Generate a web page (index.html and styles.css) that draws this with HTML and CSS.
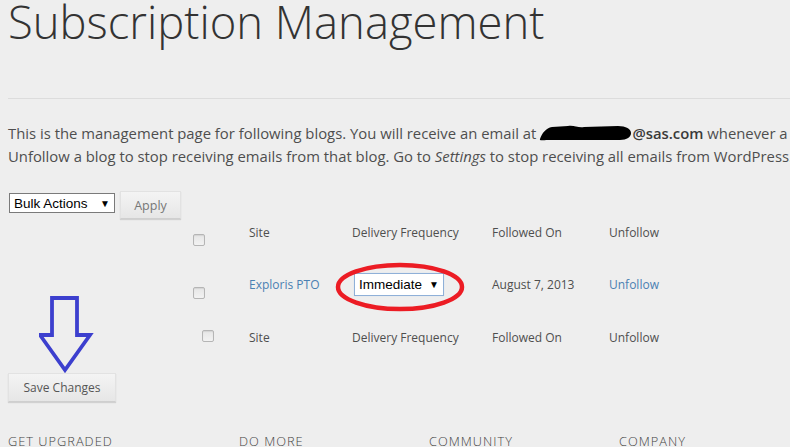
FILE: index.html
```html
<!DOCTYPE html>
<html lang="en">
<head>
<meta charset="utf-8">
<title>Subscription Management</title>
<link rel="stylesheet" href="styles.css">
</head>
<body>
<div class="page">
  <h1 class="title">Subscription Management</h1>
  <hr class="rule">
  <p class="intro">This is the management page for following blogs. You will receive an email at<svg class="redact" width="96" height="16" viewBox="0 0 96 16"><path d="M4 14 C6 8 10 3 16 2 L32 1 C38 0 42 3 48 2 L82 1 C90 1 95 4 95 8 C95 12 91 15 84 15 L12 15 C7 15 3 16 4 14 Z" fill="#000"/></svg><b class="email">@sas.com</b> whenever a new post is published on a blog you follow.<br>Unfollow a blog to stop receiving emails from that blog. Go to <i>Settings</i> to stop receiving all emails from WordPress.com.</p>

  <div class="bulk">
    <span class="select bulk-select"><span class="select-label">Bulk Actions</span><span class="caret">&#9660;</span></span>
    <span class="btn btn-apply">Apply</span>
  </div>

  <div class="subs">
    <div class="row row-head">
      <span class="cb cb-head"></span>
      <span class="col col-site">Site</span>
      <span class="col col-freq">Delivery Frequency</span>
      <span class="col col-date">Followed On</span>
      <span class="col col-unf">Unfollow</span>
    </div>
    <div class="row row-item">
      <span class="cb cb-item"></span>
      <span class="col col-site"><a class="link">Exploris PTO</a></span>
      <span class="col col-freq"><span class="select freq-select"><span class="select-label">Immediate</span><span class="caret">&#9660;</span></span></span>
      <span class="col col-date">August 7, 2013</span>
      <span class="col col-unf"><a class="link">Unfollow</a></span>
    </div>
    <div class="row row-foot">
      <span class="cb cb-foot"></span>
      <span class="col col-site">Site</span>
      <span class="col col-freq">Delivery Frequency</span>
      <span class="col col-date">Followed On</span>
      <span class="col col-unf">Unfollow</span>
    </div>
  </div>

  <div class="save">
    <span class="btn btn-save">Save Changes</span>
  </div>

  <footer class="footer">
    <span class="fcol fcol-1">Get Upgraded</span>
    <span class="fcol fcol-2">Do More</span>
    <span class="fcol fcol-3">Community</span>
    <span class="fcol fcol-4">Company</span>
  </footer>

  <svg class="oval" width="140" height="60" viewBox="0 0 140 60">
    <ellipse cx="70" cy="30" rx="62" ry="22" fill="none" stroke="#ec1c24" stroke-width="4.5"/>
  </svg>
  <svg class="arrow" width="60" height="80" viewBox="0 0 60 80">
    <polygon points="13,3 38,3 38,40 51,40 26,75 1,40 13,40" fill="none" stroke="#3c3fce" stroke-width="3.8" stroke-linejoin="miter"/>
  </svg>
</div>
</body>
</html>
```
FILE: styles.css
```css
html, body {
  margin: 0;
  padding: 0;
  background: #eeeeee;
  overflow: hidden;
}
.page {
  position: relative;
  width: 782px;
  height: 447px;
  padding: 0 0 0 8px;
  overflow: hidden;
  font-family: "Open Sans", "Liberation Sans", sans-serif;
  color: #4e4e4e;
}
.title {
  margin: 0;
  font-size: 45.4px;
  line-height: 43px;
  font-weight: 300;
  color: #333;
  white-space: nowrap;
}
.rule {
  margin: 55px 0 0 0;
  border: 0;
  height: 1px;
  background: #dcdcdc;
  width: 800px;
}
.intro {
  margin: 23px 0 0 0;
  font-size: 14.85px;
  line-height: 23px;
  white-space: nowrap;
  color: #4e4e4e;
}
.redact {
  vertical-align: -2px;
}
.email {
  font-weight: 600;
  color: #3a3a3a;
}
.bulk {
  display: flex;
  align-items: flex-start;
  margin-top: 23px;
  height: 28px;
}
.select {
  display: flex;
  align-items: center;
  box-sizing: border-box;
  background: #fff;
  font-family: "Liberation Sans", Arial, sans-serif;
  font-size: 13.5px;
  color: #000;
}
.select-label {
  flex: 1;
}
.caret {
  font-size: 10px;
  margin-right: 4px;
}
.bulk-select {
  margin: 2px 0 0 1px;
  width: 106px;
  height: 20px;
  border: 1px solid #7a7a7a;
  padding-left: 4px;
}
.freq-select {
  width: 90px;
  height: 23px;
  border: 1px solid #8fb0d8;
  padding-left: 4px;
  margin-left: 2px;
  box-shadow: 0 0 1px #c8d8ee;
}
.btn {
  display: flex;
  align-items: center;
  justify-content: center;
  box-sizing: border-box;
  font-size: 12.5px;
  color: #777;
  background: linear-gradient(#f4f4f4, #e6e6e6);
  border: 1px solid #e2e2e2;
  border-bottom-color: #cfcfcf;
  box-shadow: 0 1px 1px rgba(0,0,0,0.12);
}
.btn-apply {
  width: 61px;
  height: 28px;
  margin-left: 5px;
}
.subs {
  margin-left: 185px;
}
.row {
  display: flex;
  align-items: center;
  font-size: 12px;
  white-space: nowrap;
}
.row-head {
  height: 26px;
  margin-bottom: 13px;
}
.row-item {
  height: 52px;
}
.row-foot {
  height: 52px;
  margin-top: 1px;
}
.cb {
  box-sizing: border-box;
  width: 12px;
  height: 12px;
  border: 1px solid #b5b5b5;
  border-radius: 2px;
  background: linear-gradient(#e6e6e6, #f2f2f2);
  box-shadow: inset 0 1px 1px rgba(0,0,0,0.08);
  align-self: flex-start;
  flex: none;
}
.cb-head { margin-top: 15px; margin-right: 44px; }
.cb-item { margin-top: 29px; margin-right: 44px; }
.cb-foot { margin-top: 19px; margin-left: 9px; margin-right: 35px; }
.col { flex: none; }
.col-site { width: 103px; }
.col-freq { width: 140px; }
.col-date { width: 117px; }
.link {
  color: #4a80b2;
  text-decoration: none;
}
.save {
  margin-top: 10px;
}
.btn-save {
  width: 108px;
  height: 29px;
  font-size: 12px;
  color: #555;
}
.footer {
  display: flex;
  margin-top: 30px;
  font-size: 12.8px;
  line-height: 18px;
  font-weight: 300;
  letter-spacing: 1px;
  text-transform: uppercase;
  color: #444;
  white-space: nowrap;
}
.fcol-1 { width: 231px; }
.fcol-2 { width: 190px; }
.fcol-3 { width: 190px; }
.oval {
  position: absolute;
  left: 330px;
  top: 257px;
}
.arrow {
  position: absolute;
  left: 39px;
  top: 295px;
}
```
